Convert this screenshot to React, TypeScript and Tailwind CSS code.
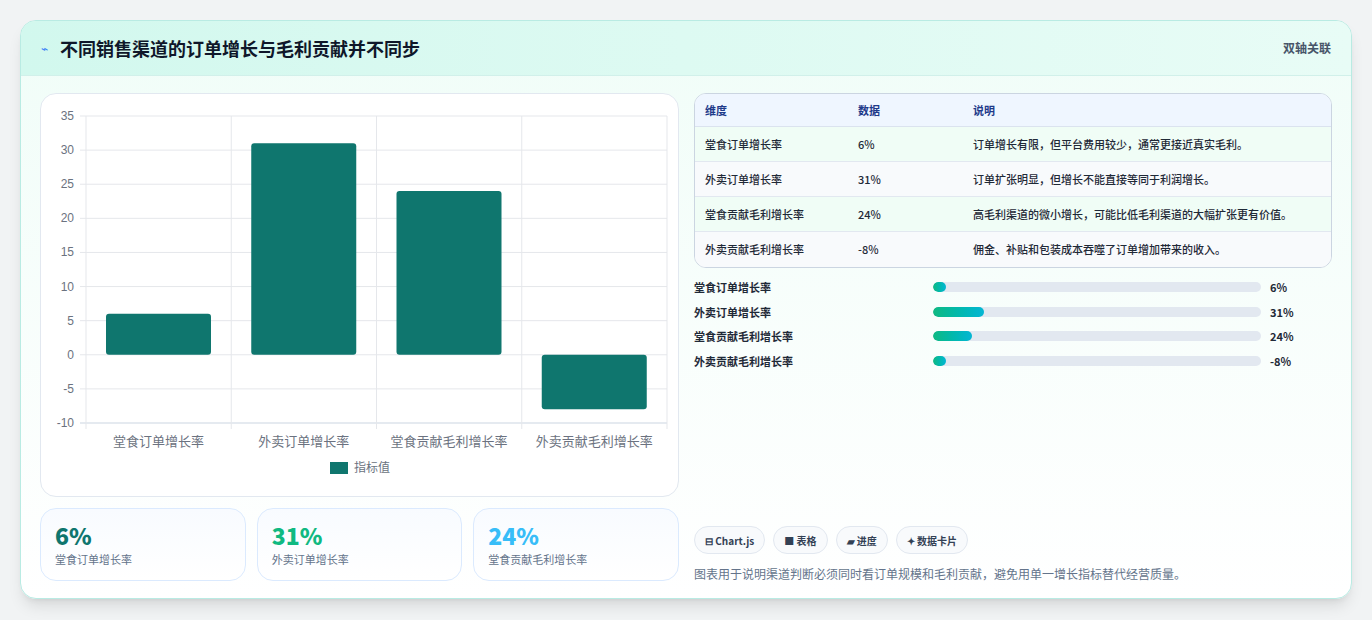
const ROWS = [
  { name: "堂食订单增长率", value: 6, note: "订单增长有限，但平台费用较少，通常更接近真实毛利。" },
  { name: "外卖订单增长率", value: 31, note: "订单扩张明显，但增长不能直接等同于利润增长。" },
  { name: "堂食贡献毛利增长率", value: 24, note: "高毛利渠道的微小增长，可能比低毛利渠道的大幅扩张更有价值。" },
  { name: "外卖贡献毛利增长率", value: -8, note: "佣金、补贴和包装成本吞噬了订单增加带来的收入。" },
];

const FONT = { fontFamily: '"Noto Sans CJK SC", "Noto Sans", sans-serif' };

function BarChart() {
  const left = 45;
  const right = 626;
  const top = 22;
  const bottom = 329;
  const unit = (bottom - top) / 45;
  const y = (v: number) => top + (35 - v) * unit;
  const colW = (right - left) / 4;
  const ticks = [35, 30, 25, 20, 15, 10, 5, 0, -5, -10];
  return (
    <svg width="638" height="403" viewBox="0 0 638 403" style={FONT}>
      {ticks.map((t) => (
        <g key={t}>
          <line x1={left - 6} x2={right} y1={y(t)} y2={y(t)} stroke={t === -10 ? "#cbd5e1" : "#e5e7eb"} />
          <text x={left - 12} y={y(t) + 4} textAnchor="end" fontSize="12" fill="#6b7280" fontFamily="Liberation Sans, sans-serif">
            {t}
          </text>
        </g>
      ))}
      {[0, 1, 2, 3, 4].map((i) => (
        <line key={i} x1={left + colW * i} x2={left + colW * i} y1={top} y2={bottom + 6} stroke="#e5e7eb" />
      ))}
      {ROWS.map((r, i) => {
        const x = left + colW * i + 20;
        const y0 = y(0);
        const y1 = y(r.value);
        return (
          <g key={r.name}>
            <rect x={x} y={Math.min(y0, y1)} width={105} height={Math.abs(y1 - y0)} rx="3" fill="#0f766e" />
            <text x={left + colW * i + colW / 2} y={bottom + 23} textAnchor="middle" fontSize="13" fill="#6b7280">
              {r.name}
            </text>
          </g>
        );
      })}
      <rect x="289" y="368" width="18" height="12" fill="#0f766e" />
      <text x="313" y="378" fontSize="12" fill="#6b7280">指标值</text>
    </svg>
  );
}

export default function App() {
  const colors = ["text-[#0f766e]", "text-[#10b981]", "text-[#38bdf8]"];
  return (
    <div className="min-h-screen bg-[#f1f3f4] p-5" style={FONT}>
      <div className="h-[579px] overflow-hidden rounded-2xl border border-[#b9ebe3] bg-gradient-to-b from-[#f0fdf8] to-white shadow-lg">
        <div className="flex h-[55px] items-center justify-between border-b border-[#d1f0ea] bg-gradient-to-r from-[#d2f8ee] to-[#e8fcf6] px-5">
          <div className="flex items-center gap-3">
            <span className="text-xs text-[#3b82f6]">⌁</span>
            <h1 className="text-lg font-bold text-[#0f172a]">不同销售渠道的订单增长与毛利贡献并不同步</h1>
          </div>
          <span className="text-xs font-semibold text-[#475569]">双轴关联</span>
        </div>
        <div className="flex gap-[15px] px-[19px] pt-[17px]">
          <div className="flex w-[639px] flex-col gap-[11px]">
            <div className="h-[404px] rounded-2xl border border-[#e2e8f0] bg-white">
              <BarChart />
            </div>
            <div className="grid grid-cols-3 gap-[11px]">
              {ROWS.slice(0, 3).map((r, i) => (
                <div key={r.name} className="h-[73px] rounded-2xl border border-[#dbeafe] bg-gradient-to-b from-[#f8fbff] to-white px-[14px] pt-[10px]">
                  <div className={`text-[23px] font-extrabold leading-8 ${colors[i]}`}>{r.value}%</div>
                  <div className="text-[11px] text-[#64748b]">{r.name}</div>
                </div>
              ))}
            </div>
          </div>
          <div className="flex w-[640px] flex-col">
            <div className="overflow-hidden rounded-xl border border-[#cbd5e1] bg-white text-[11px]">
              <div className="flex h-[33px] items-center border-b border-[#dbe3ef] bg-[#eff6ff] px-[10px] font-semibold text-[#1e3a8a]">
                <span className="w-[153px]">维度</span>
                <span className="w-[115px]">数据</span>
                <span>说明</span>
              </div>
              {ROWS.map((r, i) => (
                <div
                  key={r.name}
                  className={`flex h-[35px] items-center px-[10px] font-medium text-[#1f2937] ${i % 2 === 0 ? "bg-[#f0fdf6]" : "bg-[#f8fafc]"} ${i < 3 ? "border-b border-[#e2e8f0]" : ""}`}
                >
                  <span className="w-[153px]">{r.name}</span>
                  <span className="w-[115px]">{r.value}%</span>
                  <span>{r.note}</span>
                </div>
              ))}
            </div>
            <div className="mt-[10px] flex flex-col gap-[6px] text-[11px] font-semibold text-[#1f2937]">
              {ROWS.map((r) => (
                <div key={r.name} className="flex h-[18.5px] items-center">
                  <span className="w-[239px]">{r.name}</span>
                  <div className="h-[10px] w-[328px] overflow-hidden rounded-full bg-[#e2e8f0]">
                    <div
                      className="h-full rounded-full bg-gradient-to-r from-[#10b981] to-[#06b6d4]"
                      style={{ width: `${Math.max(Math.abs(r.value) > 10 ? r.value * 0.5 : 4, 4)}%` }}
                    />
                  </div>
                  <span className="ml-[9px] font-bold">{r.value}%</span>
                </div>
              ))}
            </div>
            <div className="mt-[156px] flex gap-[8px] text-[10px] font-bold text-[#334155]">
              {["⊟ Chart.js", "■ 表格", "▰ 进度", "✦ 数据卡片"].map((c) => (
                <span key={c} className="flex h-[28px] items-center rounded-full border border-[#e2e8f0] bg-[#f8fafc] px-[10px]">
                  {c}
                </span>
              ))}
            </div>
            <p className="mt-[12px] text-xs text-[#64748b]">图表用于说明渠道判断必须同时看订单规模和毛利贡献，避免用单一增长指标替代经营质量。</p>
          </div>
        </div>
      </div>
    </div>
  );
}
